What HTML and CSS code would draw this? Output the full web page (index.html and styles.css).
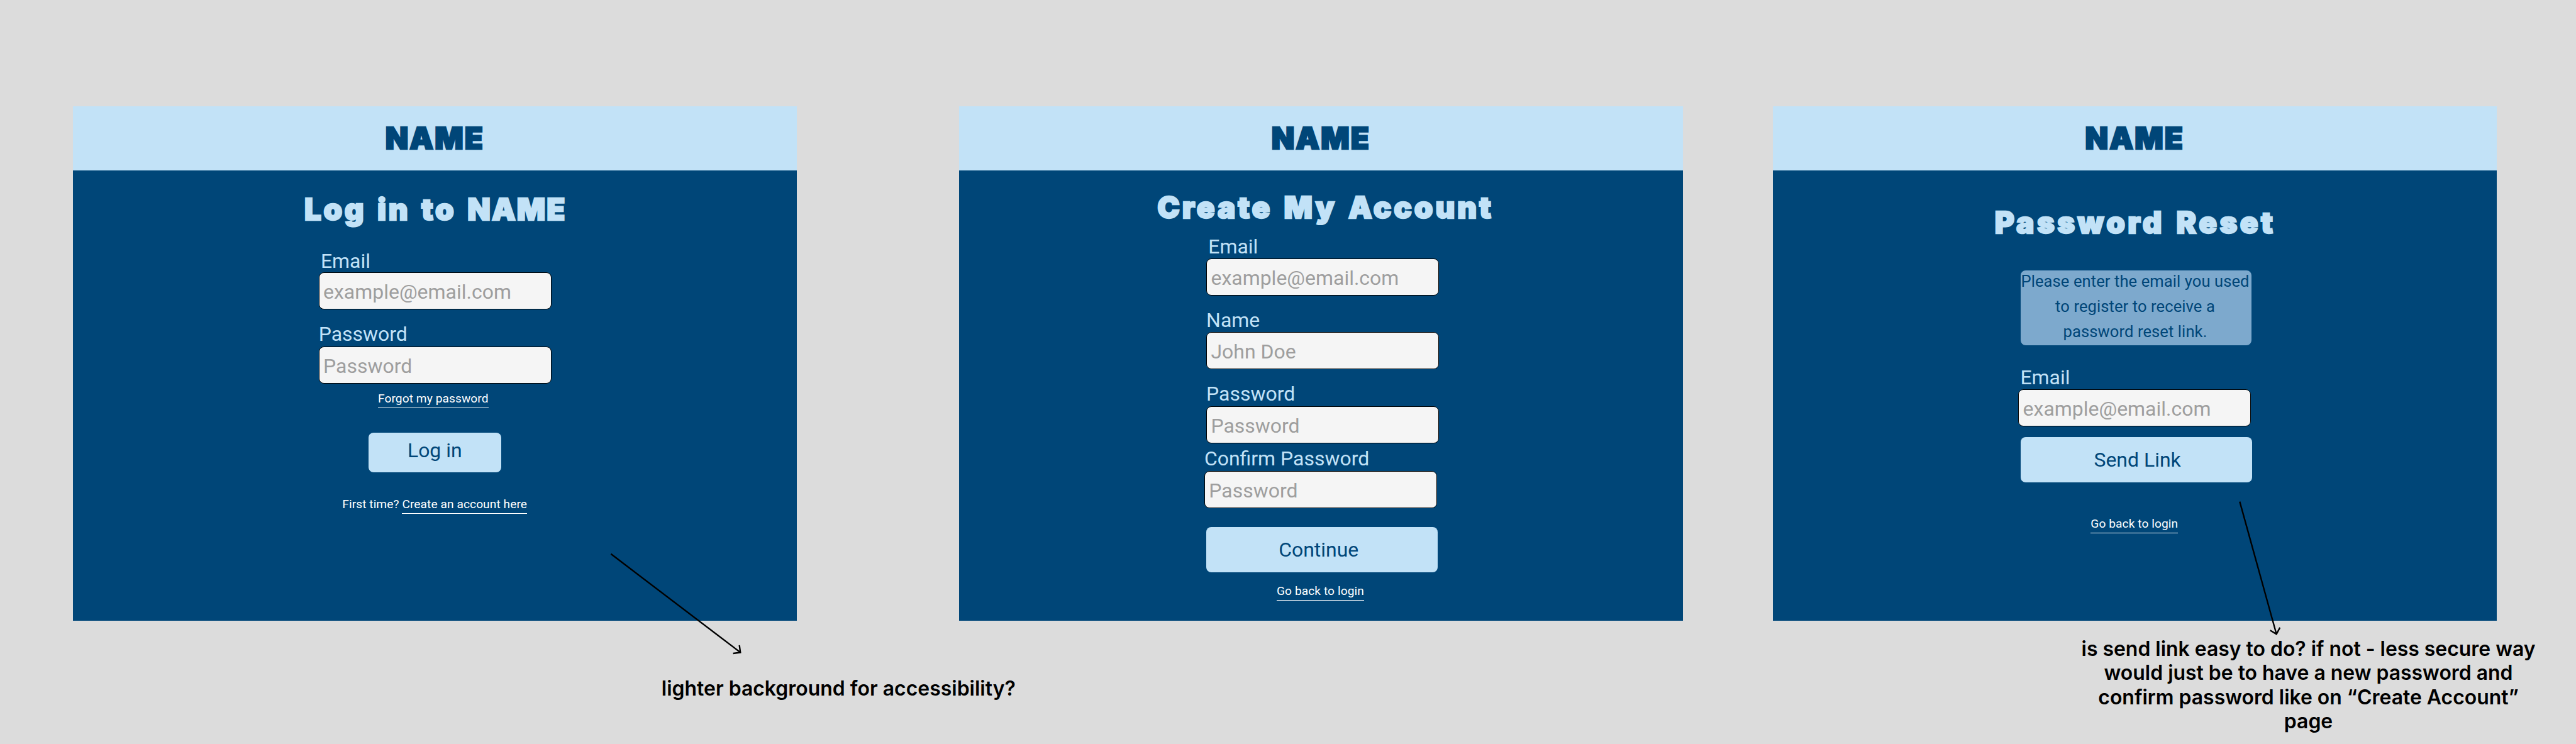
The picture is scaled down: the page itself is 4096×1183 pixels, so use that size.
FILE: index.html
```html
<!DOCTYPE html>
<html lang="en">
<head>
<meta charset="utf-8">
<title>Account screens</title>
<link rel="stylesheet" href="styles.css">
</head>
<body>
<main class="board">
  <section class="screen login">
    <header class="topbar"><span class="brand">NAME</span></header>
    <div class="content">
      <h1 class="title">Log in to <span class="title-brand">NAME</span></h1>
      <label class="label label-first">Email</label>
      <div class="field">example@email.com</div>
      <label class="label">Password</label>
      <div class="field">Password</div>
      <p class="small forgot"><a class="link">Forgot my password</a></p>
      <div class="button"><span>Log in</span></div>
      <p class="small signup"><span>First time?</span> <a class="link">Create an account here</a></p>
    </div>
  </section>

  <section class="screen create">
    <header class="topbar"><span class="brand">NAME</span></header>
    <div class="content">
      <h1 class="title">Create My Account</h1>
      <label class="label label-first">Email</label>
      <div class="field">example@email.com</div>
      <label class="label">Name</label>
      <div class="field">John Doe</div>
      <label class="label">Password</label>
      <div class="field">Password</div>
      <label class="label label-confirm">Confirm Password</label>
      <div class="field field-confirm">Password</div>
      <div class="button"><span>Continue</span></div>
      <p class="small back"><a class="link">Go back to login</a></p>
    </div>
  </section>

  <section class="screen reset">
    <header class="topbar"><span class="brand">NAME</span></header>
    <div class="content">
      <h1 class="title">Password Reset</h1>
      <p class="hint"><span>Please enter the email you used</span><span>to register to receive a</span><span>password reset link.</span></p>
      <label class="label label-first">Email</label>
      <div class="field">example@email.com</div>
      <div class="button"><span>Send Link</span></div>
      <p class="small back"><a class="link">Go back to login</a></p>
    </div>
  </section>

  <svg class="arrows" viewBox="0 0 5125 1480" fill="none" stroke="#000" stroke-width="3">
    <path d="M1215.500 1102L1473 1298M1471 1283.500L1473 1298L1458.500 1300"/>
    <path d="M4456 998L4529 1261.500M4516.500 1254L4529 1261.500L4536 1248.500"/>
  </svg>
  <p class="note note-login"><span>lighter background for accessibility?</span></p>
  <p class="note note-reset"><span>is send link easy to do? if not - less secure way</span><span>would just be to have a new password and</span><span>confirm password like on “Create Account”</span><span>page</span></p>
</main>
</body>
</html>
```
FILE: styles.css
```css
:root {
  --u: calc(100vw / 5125);
  --navy: #004678;
  --sky: #c2e2f7;
}

* { box-sizing: border-box; }

body { margin: 0; background: #dcdcdc; overflow: hidden; }
h1, p { margin: 0; }

.board {
  position: relative;
  display: flex;
  align-items: flex-start;
  width: 100vw;
  height: calc(1480 * var(--u));
  padding: calc(211 * var(--u)) 0 0 calc(145 * var(--u));
  overflow: hidden;
  font-family: Roboto, sans-serif;
}

/* Screens */
.screen {
  flex: none;
  display: flex;
  flex-direction: column;
  width: calc(1440 * var(--u));
  height: calc(1024 * var(--u));
  background: var(--navy);
}
.create { margin-left: calc(323 * var(--u)); }
.reset { margin-left: calc(179 * var(--u)); }

.topbar {
  flex: none;
  display: flex;
  justify-content: center;
  height: calc(128 * var(--u));
  background: var(--sky);
}
.brand, .title {
  font-family: Inter, sans-serif;
  font-weight: 900;
  font-size: calc(59.500 * var(--u));
  line-height: calc(80 * var(--u));
  -webkit-text-stroke: calc(3 * var(--u)) currentColor;
  white-space: nowrap;
}
.brand { letter-spacing: calc(2.600 * var(--u)); }
.brand { margin-top: calc(24 * var(--u)); color: var(--navy); }

.content {
  display: flex;
  flex-direction: column;
  align-items: flex-start;
  padding-left: calc(489 * var(--u));
}
.create .content { padding-left: calc(492 * var(--u)); }
.reset .content { padding-left: calc(488.500 * var(--u)); }

.title { height: calc(80 * var(--u)); color: var(--sky); word-spacing: calc(6 * var(--u)); }
.login .title { margin: calc(37.500 * var(--u)) 0 0 calc(-28.500 * var(--u)); letter-spacing: calc(4.500 * var(--u)); }
.create .title { margin: calc(33.500 * var(--u)) 0 0 calc(-97.500 * var(--u)); letter-spacing: calc(4.900 * var(--u)); }
.reset .title { margin: calc(63.500 * var(--u)) 0 0 calc(-47 * var(--u)); letter-spacing: calc(5.500 * var(--u)); }
.login .title-brand { letter-spacing: calc(2.600 * var(--u)); }

/* Form controls */
.label {
  height: calc(47 * var(--u));
  margin-top: calc(26 * var(--u));
  font-size: calc(40 * var(--u));
  line-height: calc(47 * var(--u));
  white-space: nowrap;
  color: var(--sky);
}
.field {
  width: calc(463 * var(--u));
  height: calc(74 * var(--u));
  padding-left: calc(8 * var(--u));
  border: 1px solid #000;
  border-radius: calc(10 * var(--u));
  background: #f5f5f5;
  font-size: calc(40 * var(--u));
  line-height: calc(77 * var(--u));
  white-space: nowrap;
  color: #9e9e9e;
}
.login .label-first { margin: calc(38.500 * var(--u)) 0 0 calc(4 * var(--u)); line-height: calc(48 * var(--u)); }
.create .label-first { margin: calc(14.500 * var(--u)) 0 0 calc(4 * var(--u)); line-height: calc(48 * var(--u)); }
.create .label-confirm { margin: calc(8 * var(--u)) 0 0 calc(-4 * var(--u)); }
.create .field-confirm { margin-left: calc(-4 * var(--u)); }
.reset .label-first { margin: calc(40.500 * var(--u)) 0 0 calc(4 * var(--u)); line-height: calc(48 * var(--u)); }

.button {
  display: flex;
  justify-content: center;
  width: calc(460 * var(--u));
  height: calc(90 * var(--u));
  border-radius: calc(10 * var(--u));
  background: var(--sky);
  color: var(--navy);
  font-size: calc(40 * var(--u));
  line-height: calc(91 * var(--u));
}
.login .button {
  width: calc(264 * var(--u));
  height: calc(79 * var(--u));
  margin: calc(47 * var(--u)) 0 0 calc(99 * var(--u));
  line-height: calc(71 * var(--u));
}
.create .button { margin-top: calc(38 * var(--u)); padding-right: calc(13 * var(--u)); }
.reset .button { margin: calc(21.500 * var(--u)) 0 0 calc(5 * var(--u)); padding-left: calc(4 * var(--u)); }

.small {
  font-size: calc(24 * var(--u));
  line-height: calc(30 * var(--u));
  letter-spacing: calc(.08 * var(--u));
  white-space: nowrap;
  color: #fff;
}
.link {
  display: inline-block;
  height: calc(34 * var(--u));
  border-bottom: 1px solid #fff;
}
.forgot { margin: calc(15 * var(--u)) 0 0 calc(118 * var(--u)); height: calc(36 * var(--u)); }
.signup { margin: calc(48 * var(--u)) 0 0 calc(47 * var(--u)); }
.create .back { margin: calc(22 * var(--u)) 0 0 calc(140 * var(--u)); }
.reset .back { margin: calc(67.500 * var(--u)) 0 0 calc(144 * var(--u)); }

.hint {
  display: flex;
  flex-direction: column;
  align-items: center;
  width: calc(459 * var(--u));
  height: calc(149 * var(--u));
  margin: calc(55.500 * var(--u)) 0 0 calc(5 * var(--u));
  padding-right: calc(4 * var(--u));
  border-radius: calc(10 * var(--u));
  background: #7da9cd;
  color: var(--navy);
  font-size: calc(32 * var(--u));
  line-height: calc(50 * var(--u));
  letter-spacing: calc(.1 * var(--u));
  white-space: nowrap;
}
.hint span { margin-top: calc(-2.500 * var(--u)); margin-bottom: calc(2.500 * var(--u)); }

/* Review annotations pinned on the canvas */
.arrows { position: absolute; left: 0; top: 0; width: 100%; height: 100%; }
.note {
  position: absolute;
  display: flex;
  flex-direction: column;
  align-items: center;
  font-family: Inter, sans-serif;
  font-weight: 600;
  font-size: calc(40 * var(--u));
  line-height: calc(48.200 * var(--u));
  white-space: nowrap;
  color: #000;
}
.note-login { left: calc(1316 * var(--u)); top: calc(1346 * var(--u)); }
.note-reset { left: calc(4141 * var(--u)); top: calc(1267 * var(--u)); letter-spacing: calc(-.03 * var(--u)); }
```
